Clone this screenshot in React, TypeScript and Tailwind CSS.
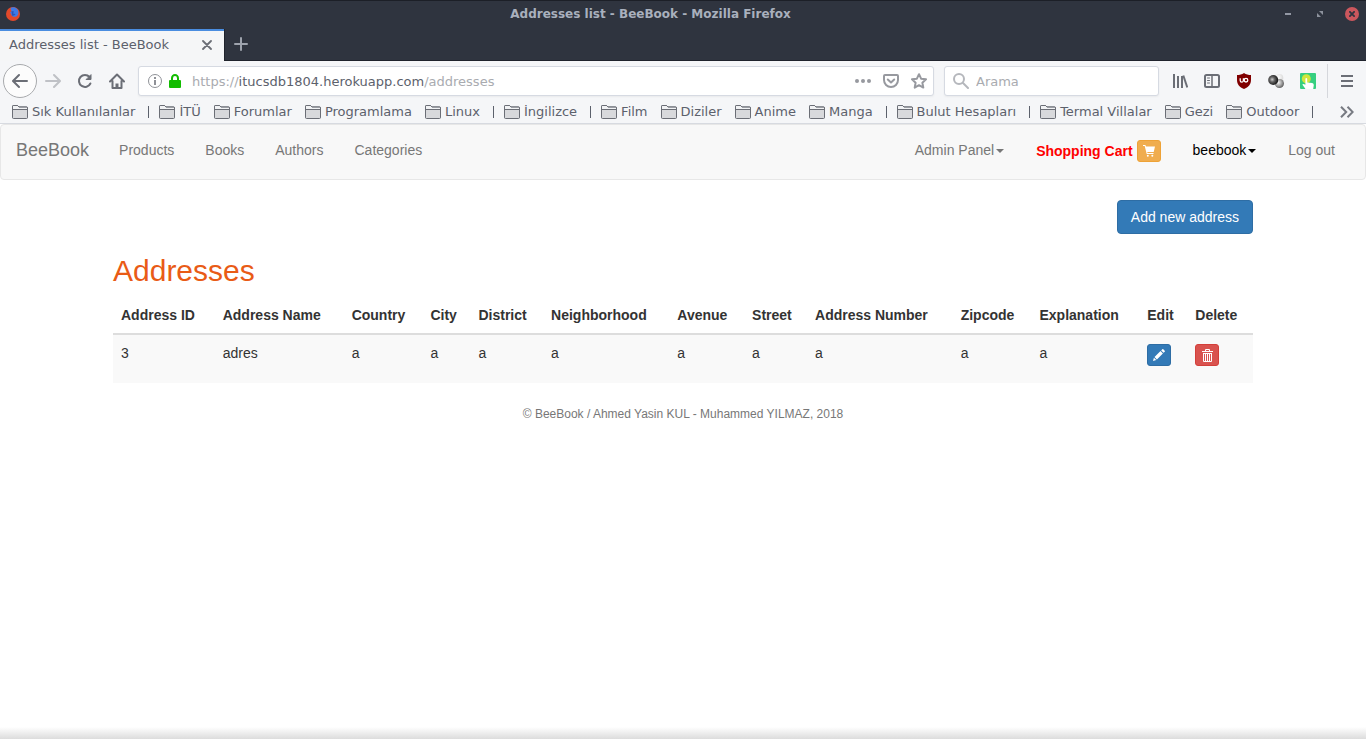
import React from "react";

const chromeFont = "font-['DejaVu_Sans',sans-serif]";
const pageFont = "font-['Liberation_Sans',Arial,sans-serif]";

const bookmarkGroups: string[][] = [
  ["Sık Kullanılanlar"],
  ["İTÜ", "Forumlar", "Programlama", "Linux"],
  ["İngilizce"],
  ["Film", "Diziler", "Anime", "Manga"],
  ["Bulut Hesapları"],
  ["Termal Villalar", "Gezi", "Outdoor"],
];

const columns = [
  "Address ID",
  "Address Name",
  "Country",
  "City",
  "District",
  "Neighborhood",
  "Avenue",
  "Street",
  "Address Number",
  "Zipcode",
  "Explanation",
  "Edit",
  "Delete",
];

const addresses = [["3", "adres", "a", "a", "a", "a", "a", "a", "a", "a", "a"]];

function FirefoxLogo() {
  return (
    <svg width="14" height="14" viewBox="0 0 14 14" aria-hidden="true">
      <circle cx="7" cy="7" r="7" fill="#e2492b" />
      <path d="M4.500 1C6 .1 8.600-.1 10.600 1.500c1.900 1.500 2.300 4.500 1.200 6.400C10.600 9.900 8 10.300 6.500 9.200 5 8.300 5.500 7.400 4.800 6.600L4 5.500l1.500-1z" fill="#3f7be6" />
      <path d="M5.500 4l2.500.5-1 2 2.500.5c-.5 1.500-2.500 2-3.500 1.500z" fill="#2c56b8" />
    </svg>
  );
}

function FolderIcon() {
  return (
    <svg width="16" height="14" viewBox="0 0 16 14" fill="#d8d9dc" stroke="#6b6e76" aria-hidden="true">
      <path d="M.5 12.500V1.500q0-1 1-1h4l1.500 1.500h7.500q1 0 1 1v9.500q0 1-1 1h-13q-1 0-1-1z" />
      <path d="M1 2.500V1h4.500L7 2.500h8v2H7.500L6.500 4H1z" fill="#f1f2f4" stroke="none" />
      <path d="M.5 4.500h15M.5 12.500V1.500q0-1 1-1h4l1.500 1.500h7.500q1 0 1 1v9.500" fill="none" />
    </svg>
  );
}

function Stroke({ children, className = "" }: { children: React.ReactNode; className?: string }) {
  return (
    <svg
      width="16"
      height="16"
      viewBox="0 0 16 16"
      fill="none"
      stroke="currentColor"
      strokeWidth="2"
      strokeLinecap="round"
      strokeLinejoin="round"
      className={className}
      aria-hidden="true"
    >
      {children}
    </svg>
  );
}

function UblockIcon() {
  return (
    <svg width="16" height="16" viewBox="0 0 16 16" aria-hidden="true">
      <path d="M8 0c2 1.500 4.500 2 7 2v5c0 4.500-2.500 7-7 9-4.500-2-7-4.500-7-9V2c2.500 0 5-.5 7-2z" fill="#800000" />
      <path d="M4.200 5.200v2.300a1.600 1.600 0 0 0 3.200 0V5.200" fill="none" stroke="#fff" strokeWidth="1.300" />
      <circle cx="10" cy="7.200" r="1.800" fill="none" stroke="#fff" strokeWidth="1.300" />
    </svg>
  );
}

function SpheresIcon() {
  return (
    <svg width="16" height="16" viewBox="0 0 16 16" aria-hidden="true">
      <defs>
        <radialGradient id="dark" cx=".4" cy=".45" r=".6">
          <stop offset="0" stopColor="#ccc" />
          <stop offset=".4" stopColor="#666" />
          <stop offset="1" stopColor="#111" />
        </radialGradient>
        <radialGradient id="mid" cx=".4" cy=".4" r=".65">
          <stop offset="0" stopColor="#f4f4f4" />
          <stop offset=".5" stopColor="#aaa" />
          <stop offset="1" stopColor="#555" />
        </radialGradient>
        <radialGradient id="light" cx=".4" cy=".4" r=".7">
          <stop offset="0" stopColor="#fff" />
          <stop offset="1" stopColor="#d4d4d4" />
        </radialGradient>
      </defs>
      <circle cx="11.300" cy="5" r="4" fill="url(#light)" />
      <circle cx="11.400" cy="10.500" r="4.600" fill="url(#mid)" />
      <circle cx="5.200" cy="7" r="5" fill="url(#dark)" />
    </svg>
  );
}

function TouchIcon() {
  return (
    <svg width="16" height="16" viewBox="0 0 16 16" aria-hidden="true">
      <rect width="16" height="16" rx="1" fill="#36cf80" />
      <circle cx="6.300" cy="5.800" r="4.500" fill="#cfe63c" />
      <path d="M5.400 5.500q.9-1 1.800 0v4l5 .6q1.600.4 1.600 2L13.200 16H5.500L2.300 11.500q.8-1.200 3.100.3z" fill="#fff" />
    </svg>
  );
}

function CartIcon() {
  return (
    <svg width="12" height="12" viewBox="0 0 12 12" fill="#fff" aria-hidden="true">
      <path d="M0 0h2.400l.5 1.500H12L10.700 7H4.200l.3 1h6v1H3.700L1.700 1H0z" />
      <circle cx="4.800" cy="10.800" r="1" />
      <circle cx="9.300" cy="10.800" r="1" />
    </svg>
  );
}

function PencilIcon() {
  return (
    <svg width="12" height="12" viewBox="0 0 12 12" fill="#fff" aria-hidden="true">
      <path d="M0 12l.9-3.300 2.400 2.400zM1.500 8.100l6-6 2.400 2.400-6 6zM8.200 1.400L9.300.3q.5-.5 1 0l1.400 1.400q.5.5 0 1l-1.100 1.100z" />
    </svg>
  );
}

function TrashIcon() {
  return (
    <svg width="11" height="13" viewBox="0 0 11 13" fill="none" stroke="#fff" aria-hidden="true">
      <path d="M0 2.500h11M3.500 2V.5h4V2M1.500 4v8.500h8V4M3.500 4v8M5.500 4v8M7.500 4v8M1 4.500h9" />
    </svg>
  );
}

function Caret() {
  return <span className="ml-0.5 inline-block border-x-4 border-t-4 border-x-transparent border-t-current align-middle" />;
}

function TitleBar() {
  return (
    <div className="flex h-7 items-center border-t border-[#1c1f27] bg-[#2f343f] pr-[7px] pb-px pl-1.5">
      <div className="flex flex-1"><FirefoxLogo /></div>
      <div className="pr-[64px] text-[12px] leading-4 font-bold text-[#a9b0bd]">Addresses list - BeeBook - Mozilla Firefox</div>
      <div className="flex flex-1 items-center justify-end text-[#8d929d]">
        <button aria-label="Minimize" className="mr-[26px] h-0.5 w-1.5 bg-[#9398a4]" />
        <button aria-label="Restore" className="mr-[22px]">
          <svg width="6" height="6" viewBox="0 0 6 6" fill="currentColor"><path d="M2 0h4v4zM0 2v4h4z" /></svg>
        </button>
        <button aria-label="Close window" className="flex size-3.5 items-center justify-center rounded-full bg-[#cc575d] text-[#2f343f]">
          <svg width="6" height="6" viewBox="0 0 6 6" stroke="currentColor" strokeWidth="1.800"><path d="M.3.3l5.400 5.400M5.700.3L.3 5.700" /></svg>
        </button>
      </div>
    </div>
  );
}

function TabStrip() {
  return (
    <div className="flex h-[33px] bg-[#2f343f] pt-px">
      <div className="flex w-[224px] items-center justify-between border-t-2 border-[#4a8de0] bg-[#f5f6f7] pr-3 pb-0.5 pl-[9px] text-[13px] text-[#5c616c]">
        <span>Addresses list - BeeBook</span>
        <button aria-label="Close tab">
          <svg width="10" height="10" viewBox="0 0 10 10" fill="none" stroke="#6b6e76" strokeWidth="1.800" strokeLinecap="round"><path d="M1 1l8 8M9 1L1 9" /></svg>
        </button>
      </div>
      <div className="flex flex-1 items-center border-b border-l border-[#1f232c] pb-px pl-[9px]">
        <button aria-label="New tab">
          <svg width="14" height="14" viewBox="0 0 14 14" fill="none" stroke="#9ea3ad" strokeWidth="2" strokeLinecap="round"><path d="M7 1v12M1 7h12" /></svg>
        </button>
      </div>
    </div>
  );
}

function Toolbar() {
  return (
    <div className="flex h-10 items-center bg-[#f5f6f8] pl-[3px] text-[#6b6e76]">
      <button aria-label="Back" className="flex size-[34px] shrink-0 items-center justify-center rounded-full border border-[#a8aaad] bg-[#fcfcfc]">
        <Stroke><path d="M15 8H1.500M7 2L1 8l6 6" /></Stroke>
      </button>
      <button aria-label="Forward" className="ml-2 text-[#bfc1c6]"><Stroke><path d="M1 8h13.500M9 2l6 6-6 6" /></Stroke></button>
      <button aria-label="Reload" className="ml-4">
        <Stroke><path d="M13.400 10.500A6 6 0 1 1 12.500 4" /><path d="M14 2v4.500H9.500z" fill="currentColor" strokeWidth="1" /></Stroke>
      </button>
      <button aria-label="Home" className="ml-4"><Stroke><path d="M1 8.500l7-7 7 7M3.500 8v7h9V8" /><path d="M8 10.500V15" strokeWidth="3" strokeLinecap="butt" /></Stroke></button>
      <div className="ml-[13px] flex h-[30px] flex-1 items-center rounded-[3px] border border-[#d6dae2] bg-white pr-1.5 pl-[9px] shadow-xs">
        <svg width="14" height="14" viewBox="0 0 14 14" fill="none" stroke="#8f9197" aria-hidden="true"><circle cx="7" cy="7" r="6.500" /><path d="M7 6v5" strokeWidth="2" /><path d="M7 3v2" strokeWidth="2" /></svg>
        <svg width="12" height="14" viewBox="0 0 12 14" className="ml-[7px]" aria-hidden="true"><rect y="6" width="12" height="8" rx="1" fill="#12bc00" /><path d="M3 7V4.200a3 3.200 0 0 1 6 0V7" fill="none" stroke="#12bc00" strokeWidth="2" /></svg>
        <a href="https://itucsdb1804.herokuapp.com/addresses" className="ml-[11px] flex-1 pt-0.5 text-[13px] leading-5 text-[#a9abb0]">
          https://<span className="text-[#5c616c]">itucsdb1804.herokuapp.com</span>/addresses
        </a>
        <button aria-label="Page actions"><svg width="16" height="4" viewBox="0 0 16 4" fill="#97999f"><circle cx="2" cy="2" r="2" /><circle cx="8" cy="2" r="2" /><circle cx="14" cy="2" r="2" /></svg></button>
        <button aria-label="Save to Pocket" className="ml-3 text-[#97999f]"><Stroke><path d="M2 2h12q1 0 1 1v4a7 7 0 0 1-14 0V3q0-1 1-1zM4.800 6.500L8 9.500l3.200-3" /></Stroke></button>
        <button aria-label="Bookmark this page" className="ml-3 text-[#97999f]"><Stroke><path d="M8 1.200l2.100 4.500 4.900.6-3.600 3.400.9 4.900L8 12.200l-4.300 2.400.9-4.900L1 6.300l4.900-.6z" /></Stroke></button>
      </div>
      <label className="ml-2.5 flex h-[30px] w-[215px] items-center rounded-[3px] border border-[#d6dae2] bg-white pl-2 shadow-xs">
        <Stroke className="shrink-0 text-[#b5b7bc]"><circle cx="6" cy="6" r="5" /><path d="M10 10l5 5" /></Stroke>
        <input aria-label="Arama" placeholder="Arama" className="ml-[7px] min-w-0 flex-1 pt-0.5 text-[13px] outline-none placeholder:text-[#a9abb0]" />
      </label>
      <div className="ml-[13px] flex items-center gap-4">
        <button aria-label="Library"><svg width="16" height="16" viewBox="0 0 16 16" fill="none" stroke="currentColor" strokeWidth="2"><path d="M2 1v14M6 3v12M10 3v12" /><path d="M11.300 2.500L15.300 14.500" /></svg></button>
        <button aria-label="Sidebars"><Stroke><rect x="1" y="2" width="14" height="12" rx="1.500" /><path d="M8 2v12" strokeWidth="1.500" /><path d="M3.500 5h2M3.500 7.500h2M3.500 10h2" strokeWidth="1" /></Stroke></button>
        <button aria-label="uBlock Origin"><UblockIcon /></button>
        <button aria-label="Containers"><SpheresIcon /></button>
        <button aria-label="Touch"><TouchIcon /></button>
      </div>
      <div className="ml-[11px] h-[34px] w-px bg-[#d5d7dc]" />
      <button aria-label="Menu" className="mr-[13px] ml-[13px]"><svg width="12" height="12" viewBox="0 0 12 12" stroke="currentColor" strokeWidth="2"><path d="M0 1h12M0 6h12M0 11h12" /></svg></button>
    </div>
  );
}

function BookmarksBar() {
  return (
    <nav aria-label="Bookmarks" className="flex h-[23px] items-center border-b border-[#d7dae0] bg-[#f5f6f8] pr-3 pl-3 text-[13px] leading-4 whitespace-nowrap text-[#5c616c]">
      {bookmarkGroups.map((group) => (
        <React.Fragment key={group[0]}>
          {group.map((name) => (
            <button key={name} className="mr-[13px] flex items-center gap-1"><FolderIcon />{name}</button>
          ))}
          <span className="mr-[10px] h-3 w-px bg-[#5c616c]" />
        </React.Fragment>
      ))}
      <button aria-label="More bookmarks" className="ml-auto">
        <svg width="14" height="12" viewBox="0 0 14 12" fill="none" stroke="#777a82" strokeWidth="2"><path d="M1 .8L6.200 6 1 11.200M7.500.8L12.700 6l-5.200 5.200" /></svg>
      </button>
    </nav>
  );
}

function SiteNav() {
  return (
    <nav aria-label="Site" className="flex h-14 items-start rounded border border-[#e7e7e7] bg-[#f8f8f8] px-[15px] text-[14px] leading-5 text-[#777]">
      <a href="#home" className="mr-[15px] pt-[15px] text-[18px]">BeeBook</a>
      <div className="flex gap-px">
        {["Products", "Books", "Authors", "Categories"].map((name) => (
          <a key={name} href="#section" className="px-[15px] pt-[15px]">{name}</a>
        ))}
      </div>
      <div className="ml-auto flex items-start gap-0.5">
        <button className="px-[15px] pt-[15px]">Admin Panel<Caret /></button>
        <a href="#cart" className="flex items-center px-[15px] pt-[15px] font-bold text-[#f00]">
          Shopping Cart
          <span className="ml-1 flex h-[22px] w-6 items-center justify-center rounded-[3px] border border-[#eea236] bg-[#f0ad4e]"><CartIcon /></span>
        </a>
        <button className="px-[15px] pt-[15px] text-black">beebook<Caret /></button>
        <a href="#logout" className="px-[15px] pt-[15px]">Log out</a>
      </div>
    </nav>
  );
}

function AddressTable() {
  return (
    <table className="mt-2.5 w-full border-collapse text-left">
      <thead>
        <tr className="border-b-2 border-[#ddd]">
          {columns.map((name) => (
            <th key={name} className="p-2 font-bold whitespace-nowrap">{name}</th>
          ))}
        </tr>
      </thead>
      <tbody>
        {addresses.map((row) => (
          <tr key={row[0]} className="h-[49px] bg-[#f9f9f9] align-top">
            {row.map((value, i) => (
              <td key={i} className="p-2">{value}</td>
            ))}
            <td className="px-2 pt-[9px]">
              <button aria-label="Edit address" className="flex h-[22px] w-6 items-center justify-center rounded-[3px] border border-[#2e6da4] bg-[#337ab7]"><PencilIcon /></button>
            </td>
            <td className="px-2 pt-[9px]">
              <button aria-label="Delete address" className="flex h-[22px] w-6 items-center justify-center rounded-[3px] border border-[#d43f3a] bg-[#d9534f]"><TrashIcon /></button>
            </td>
          </tr>
        ))}
      </tbody>
    </table>
  );
}

export default function App() {
  return (
    <div className="flex min-h-screen flex-col bg-white">
      <header className={chromeFont}>
        <TitleBar />
        <TabStrip />
        <Toolbar />
        <BookmarksBar />
      </header>
      <div className={`flex flex-1 flex-col text-[14px] leading-5 text-[#333] ${pageFont}`}>
        <SiteNav />
        <main className="mx-auto w-full max-w-[1170px] px-[15px] pt-5">
          <div className="flex justify-end">
            <button className="rounded border border-[#2e6da4] bg-[#337ab7] px-[13px] py-1.5 text-white">Add new address</button>
          </div>
          <h2 className="mt-5 text-[30px] leading-[33px] text-[#e95b16]">Addresses</h2>
          <AddressTable />
        </main>
        <footer className="mt-[21px] text-center text-[12px] text-[#777]">© BeeBook / Ahmed Yasin KUL - Muhammed YILMAZ, 2018</footer>
        <div className="mt-auto h-3 bg-linear-to-b from-white to-[#dcdcdc]" />
      </div>
    </div>
  );
}
